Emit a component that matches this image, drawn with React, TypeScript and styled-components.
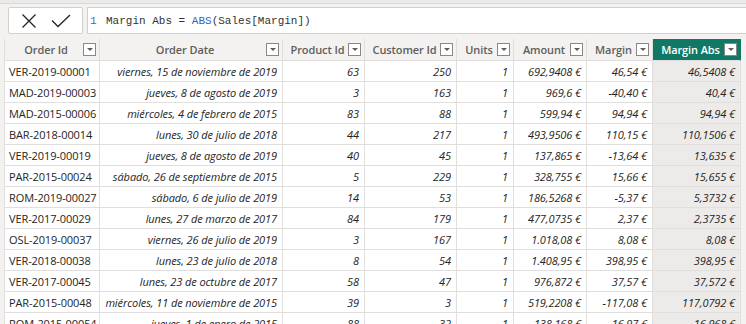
import React from "react";
import styled, { createGlobalStyle } from "styled-components";

const Global = createGlobalStyle`
  html, body { margin: 0; padding: 0; background: #f3f2f1; }
  body { font-family: "Open Sans", "Noto Sans", sans-serif; overflow: hidden; }
`;

const COLS = "96px 183px 82px 92px 57px 73px 66px 88px";

const Page = styled.div`
  width: 746px;
  height: 324px;
  overflow: hidden;
  background: #f3f2f1;
  display: flex;
  flex-direction: column;
`;

const TopStrip = styled.div`
  height: 3px;
  background: #ebeae9;
  border-bottom: 1px solid #dad8d6;
  flex: none;
`;

const FormulaBar = styled.div`
  display: flex;
  gap: 4px;
  padding: 3px 0 0 8px;
  height: 27px;
  flex: none;
`;

const ActionBox = styled.div`
  width: 73px;
  height: 25px;
  background: #fff;
  border: 1px solid #d2d0ce;
  border-radius: 2px;
  display: flex;
  align-items: center;
  justify-content: center;
  gap: 14px;
`;

const Input = styled.div`
  flex: 1;
  height: 25px;
  background: #fff;
  border: 1px solid #d2d0ce;
  border-right: none;
  display: flex;
  align-items: center;
  padding-left: 2px;
  font-family: "Liberation Mono", "DejaVu Sans Mono", monospace;
  font-size: 11px;
  color: #333;
  white-space: pre;
`;

const LineNo = styled.span`
  color: #2b6fc4;
  width: 16px;
`;

const Fn = styled.span<{ $c: string }>`
  color: ${(p) => p.$c};
`;

const TableWrap = styled.div`
  margin: 5px 0 0 4px;
  display: flex;
  flex-direction: column;
`;

const Row = styled.div`
  display: grid;
  grid-template-columns: ${COLS};
  height: 21px;
`;

const HeadRow = styled(Row)`
  height: 22px;
`;

const HeadCell = styled.div<{ $sel?: boolean; $first?: boolean }>`
  display: flex;
  align-items: center;
  padding: 0 3px 0 4px;
  background: ${(p) => (p.$sel ? "#117865" : "#f3f2f1")};
  color: ${(p) => (p.$sel ? "#ffffff" : "#605e5c")};
  border-right: 1px solid ${(p) => (p.$sel ? "#117865" : "#e1dfdd")};
  border-left: ${(p) => (p.$first ? "1px solid #e1dfdd" : "none")};
  border-bottom: 1px solid #e1dfdd;
  font-size: 11px;
  font-weight: 600;
  box-sizing: border-box;
  letter-spacing: -0.1px;
`;

const HeadLabel = styled.span`
  flex: 1;
  text-align: center;
  white-space: nowrap;
  overflow: hidden;
`;

const Drop = styled.span`
  width: 13px;
  height: 13px;
  box-sizing: border-box;
  border: 1px solid #8a8886;
  background: #fff;
  display: flex;
  align-items: center;
  justify-content: center;
  flex: none;
  &::after {
    content: "";
    border-left: 3px solid transparent;
    border-right: 3px solid transparent;
    border-top: 3px solid #605e5c;
  }
`;

const Cell = styled.div<{ $first?: boolean; $sel?: boolean }>`
  display: flex;
  align-items: center;
  justify-content: ${(p) => (p.$first ? "flex-start" : "flex-end")};
  padding: ${(p) => (p.$first ? "0 0 0 4px" : "0 5px 0 0")};
  background: ${(p) => (p.$sel ? "#edebe9" : "#ffffff")};
  border-right: 1px solid #e1dfdd;
  border-bottom: 1px solid #e1dfdd;
  border-left: ${(p) => (p.$first ? "1px solid #e1dfdd" : "none")};
  font-size: 11px;
  font-style: ${(p) => (p.$first ? "normal" : "italic")};
  color: #252423;
  white-space: nowrap;
  box-sizing: border-box;
  letter-spacing: -0.1px;
`;

const headers = ["Order Id", "Order Date", "Product Id", "Customer Id", "Units", "Amount", "Margin", "Margin Abs"];

const rows: string[][] = [
  ["VER-2019-00001", "viernes, 15 de noviembre de 2019", "63", "250", "1", "692,9408 €", "46,54 €", "46,5408 €"],
  ["MAD-2019-00003", "jueves, 8 de agosto de 2019", "3", "163", "1", "969,6 €", "-40,40 €", "40,4 €"],
  ["MAD-2015-00006", "miércoles, 4 de febrero de 2015", "83", "88", "1", "599,94 €", "94,94 €", "94,94 €"],
  ["BAR-2018-00014", "lunes, 30 de julio de 2018", "44", "217", "1", "493,9506 €", "110,15 €", "110,1506 €"],
  ["VER-2019-00019", "jueves, 8 de agosto de 2019", "40", "45", "1", "137,865 €", "-13,64 €", "13,635 €"],
  ["PAR-2015-00024", "sábado, 26 de septiembre de 2015", "5", "229", "1", "328,755 €", "15,66 €", "15,655 €"],
  ["ROM-2019-00027", "sábado, 6 de julio de 2019", "14", "53", "1", "186,5268 €", "-5,37 €", "5,3732 €"],
  ["VER-2017-00029", "lunes, 27 de marzo de 2017", "84", "179", "1", "477,0735 €", "2,37 €", "2,3735 €"],
  ["OSL-2019-00037", "viernes, 26 de julio de 2019", "3", "167", "1", "1.018,08 €", "8,08 €", "8,08 €"],
  ["VER-2018-00038", "lunes, 23 de julio de 2018", "8", "54", "1", "1.408,95 €", "398,95 €", "398,95 €"],
  ["VER-2017-00045", "lunes, 23 de octubre de 2017", "58", "47", "1", "976,872 €", "37,57 €", "37,572 €"],
  ["PAR-2015-00048", "miércoles, 11 de noviembre de 2015", "39", "3", "1", "519,2208 €", "-117,08 €", "117,0792 €"],
  ["ROM-2015-00054", "jueves, 1 de enero de 2015", "88", "32", "1", "138,168 €", "16,97 €", "16,968 €"],
];

export default function App() {
  return (
    <Page>
      <Global />
      <TopStrip />
      <FormulaBar>
        <ActionBox>
          <svg width="16" height="16" viewBox="0 0 16 16">
            <path d="M1.5 1.5 L14.5 14.5 M14.5 1.5 L1.5 14.5" stroke="#252423" strokeWidth="1.3" fill="none" />
          </svg>
          <svg width="20" height="14" viewBox="0 0 20 14">
            <path d="M1 6.5 L7 12.5 L19 1" stroke="#252423" strokeWidth="1.3" fill="none" />
          </svg>
        </ActionBox>
        <Input>
          <LineNo>1</LineNo>
          {"Margin Abs = "}
          <Fn $c="#3165bb">ABS</Fn>
          {"(Sales[Margin])"}
        </Input>
      </FormulaBar>
      <TableWrap>
        <HeadRow>
          {headers.map((h, i) => (
            <HeadCell key={h} $sel={i === 7} $first={i === 0}>
              <HeadLabel>{h}</HeadLabel>
              <Drop />
            </HeadCell>
          ))}
        </HeadRow>
        {rows.map((r) => (
          <Row key={r[0]}>
            {r.map((v, i) => (
              <Cell key={i} $first={i === 0} $sel={i === 7}>
                {v}
              </Cell>
            ))}
          </Row>
        ))}
      </TableWrap>
    </Page>
  );
}
